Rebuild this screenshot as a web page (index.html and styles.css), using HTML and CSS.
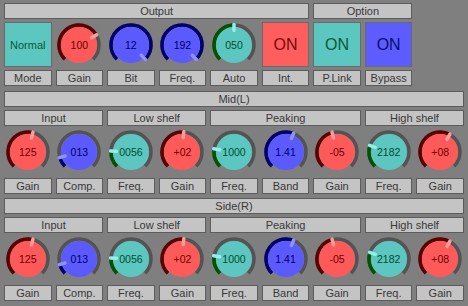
FILE: index.html
```html
<!DOCTYPE html>
<html lang="en">

<head>
    <meta charset="UTF-8">
    <meta name="viewport" content="width=device-width, initial-scale=1.0">
    <title>Mid/Side EQ</title>
    <link rel="stylesheet" href="styles.css">
</head>

<body>
    <div class="panel">
        <!-- Output / Option -->
        <div class="section top">
            <div class="box head span6">Output</div>
            <div class="box head span2">Option</div>
            <div></div>

            <div class="btn teal">Normal</div>
            <div class="knob" data-color="red" data-angle="60" data-value="100"></div>
            <div class="knob" data-color="blue" data-angle="135" data-value="12"></div>
            <div class="knob" data-color="blue" data-angle="135" data-value="192"></div>
            <div class="knob" data-color="teal" data-angle="0" data-value="050"></div>
            <div class="btn red big">ON</div>
            <div class="btn teal big">ON</div>
            <div class="btn blue big">ON</div>
            <div></div>

            <div class="box">Mode</div>
            <div class="box">Gain</div>
            <div class="box">Bit</div>
            <div class="box">Freq.</div>
            <div class="box">Auto</div>
            <div class="box">Int.</div>
            <div class="box">P.Link</div>
            <div class="box">Bypass</div>
            <div></div>
        </div>

        <!-- Mid(L) -->
        <div class="section eq">
            <div class="box head span9">Mid(L)</div>
            <div class="box head span2">Input</div>
            <div class="box head span2">Low shelf</div>
            <div class="box head span3">Peaking</div>
            <div class="box head span2">High shelf</div>

            <div class="knob" data-color="red" data-angle="14" data-value="125"></div>
            <div class="knob" data-color="blue" data-angle="-106" data-value="013"></div>
            <div class="knob" data-color="teal" data-angle="-87" data-value="0056"></div>
            <div class="knob" data-color="red" data-angle="5" data-value="+02"></div>
            <div class="knob" data-color="teal" data-angle="-81" data-value="1000"></div>
            <div class="knob" data-color="blue" data-angle="22" data-value="1.41"></div>
            <div class="knob" data-color="red" data-angle="-14" data-value="-05"></div>
            <div class="knob" data-color="teal" data-angle="-71" data-value="2182"></div>
            <div class="knob" data-color="red" data-angle="29" data-value="+08"></div>

            <div class="box">Gain</div>
            <div class="box">Comp.</div>
            <div class="box">Freq.</div>
            <div class="box">Gain</div>
            <div class="box">Freq.</div>
            <div class="box">Band</div>
            <div class="box">Gain</div>
            <div class="box">Freq.</div>
            <div class="box">Gain</div>
        </div>

        <!-- Side(R) -->
        <div class="section eq">
            <div class="box head span9">Side(R)</div>
            <div class="box head span2">Input</div>
            <div class="box head span2">Low shelf</div>
            <div class="box head span3">Peaking</div>
            <div class="box head span2">High shelf</div>

            <div class="knob" data-color="red" data-angle="14" data-value="125"></div>
            <div class="knob" data-color="blue" data-angle="-106" data-value="013"></div>
            <div class="knob" data-color="teal" data-angle="-87" data-value="0056"></div>
            <div class="knob" data-color="red" data-angle="5" data-value="+02"></div>
            <div class="knob" data-color="teal" data-angle="-81" data-value="1000"></div>
            <div class="knob" data-color="blue" data-angle="22" data-value="1.41"></div>
            <div class="knob" data-color="red" data-angle="-14" data-value="-05"></div>
            <div class="knob" data-color="teal" data-angle="-71" data-value="2182"></div>
            <div class="knob" data-color="red" data-angle="29" data-value="+08"></div>

            <div class="box">Gain</div>
            <div class="box">Comp.</div>
            <div class="box">Freq.</div>
            <div class="box">Gain</div>
            <div class="box">Freq.</div>
            <div class="box">Band</div>
            <div class="box">Gain</div>
            <div class="box">Freq.</div>
            <div class="box">Gain</div>
        </div>
    </div>

    <script>
        // Colores de cada tipo de perilla
        const colores = {
            red: { fill: '#ff5a5a', arc: '#5e0000', tip: '#ff9a9a', text: '#6a0000' },
            blue: { fill: '#5a5aff', arc: '#00006e', tip: '#9090ff', text: '#00005e' },
            teal: { fill: '#5cc6c0', arc: '#005400', tip: '#94ecec', text: '#004f2a' }
        };

        const C = 22;

        function punto(r, a) {
            const rad = a * Math.PI / 180;
            return [(C + r * Math.sin(rad)).toFixed(2), (C - r * Math.cos(rad)).toFixed(2)];
        }

        function arco(r, desde, hasta) {
            const p1 = punto(r, desde);
            const p2 = punto(r, hasta);
            const grande = (hasta - desde) > 180 ? 1 : 0;
            return `M${p1[0]} ${p1[1]} A${r} ${r} 0 ${grande} 1 ${p2[0]} ${p2[1]}`;
        }

        document.querySelectorAll('.knob').forEach(knob => {
            const c = colores[knob.dataset.color];
            const ang = parseFloat(knob.dataset.angle);
            const t1 = punto(14.5, ang);
            const t2 = punto(20.5, ang);
            knob.innerHTML = `
                <svg width="44" height="44" viewBox="0 0 44 44">
                    <path d="${arco(20, -135, 135)}" fill="none" stroke="#535353" stroke-width="3.5"/>
                    <path d="${arco(20, -135, ang)}" fill="none" stroke="${c.arc}" stroke-width="3.5"/>
                    <circle cx="22" cy="22" r="18" fill="${c.fill}"/>
                    <line x1="${t1[0]}" y1="${t1[1]}" x2="${t2[0]}" y2="${t2[1]}" stroke="${c.tip}" stroke-width="3.5" stroke-linecap="round"/>
                </svg>
                <span class="valor" style="color:${c.text}">${knob.dataset.value}</span>`;
        });
    </script>
</body>

</html>
```

FILE: styles.css
```css
body {
    margin: 0;
    padding: 0;
    background-color: #7f7f7f;
    font-family: "Liberation Sans", Arial, sans-serif;
}

.panel {
    display: flex;
    flex-direction: column;
    gap: 4px;
    padding: 3px 4px;
}

.section {
    display: grid;
    grid-template-columns: repeat(9, 1fr);
    column-gap: 4px;
    row-gap: 3px;
}

.top {
    grid-template-rows: 16px 45px 16px;
    margin-bottom: 1px;
}

.eq {
    grid-template-rows: 16px 16px 46px 16px;
}

.box {
    box-sizing: border-box;
    background-color: #c4c4c4;
    border: 1px solid #5c5c5c;
    color: #383838;
    font-size: 11px;
    line-height: 14px;
    text-align: center;
    white-space: nowrap;
}

.span2 {
    grid-column: span 2;
}

.span3 {
    grid-column: span 3;
}

.span6 {
    grid-column: span 6;
}

.span9 {
    grid-column: span 9;
}

.btn {
    box-sizing: border-box;
    display: flex;
    align-items: center;
    justify-content: center;
    border: 1px solid #6a6a6a;
    font-size: 11px;
}

.btn.big {
    font-size: 16px;
}

.teal {
    background-color: #5cc6c0;
    color: #0a5a34;
}

.red {
    background-color: #ff5e5e;
    color: #780808;
}

.blue {
    background-color: #5c5cff;
    color: #0c0c6e;
}

.knob {
    position: relative;
    display: flex;
    align-items: center;
    justify-content: center;
}

.knob svg {
    display: block;
}

/* Valor encima de la perilla */
.valor {
    position: absolute;
    left: 0;
    right: 0;
    top: 50%;
    transform: translateY(-50%);
    text-align: center;
    font-size: 10.5px;
}
```
